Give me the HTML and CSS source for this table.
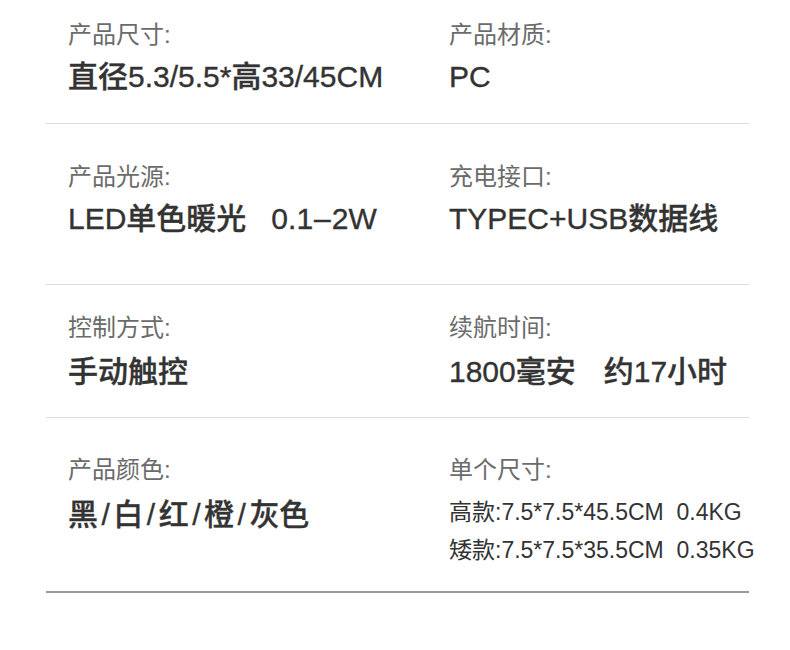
FILE: index.html
```html
<!DOCTYPE html>
<html lang="zh-CN">
<head>
<meta charset="utf-8">
<title>产品参数</title>
<link rel="stylesheet" href="styles.css">
</head>
<body>
<main class="specs">
  <section class="row row-1">
    <div class="cell">
      <div class="label">产品尺寸:</div>
      <div class="value">直径5.3/5.5*高33/45CM</div>
    </div>
    <div class="cell">
      <div class="label">产品材质:</div>
      <div class="value">PC</div>
    </div>
  </section>
  <section class="row row-2">
    <div class="cell">
      <div class="label">产品光源:</div>
      <div class="value">LED单色暖光&nbsp;&nbsp; 0.1<span class="dash">–</span>2W</div>
    </div>
    <div class="cell">
      <div class="label">充电接口:</div>
      <div class="value">TYPEC+USB数据线</div>
    </div>
  </section>
  <section class="row row-3">
    <div class="cell">
      <div class="label">控制方式:</div>
      <div class="value">手动触控</div>
    </div>
    <div class="cell">
      <div class="label">续航时间:</div>
      <div class="value">1800毫安<span class="gap"></span>约17小时</div>
    </div>
  </section>
  <section class="row row-4">
    <div class="cell">
      <div class="label">产品颜色:</div>
      <div class="value">黑<span class="sep">/</span>白<span class="sep">/</span>红<span class="sep">/</span>橙<span class="sep">/</span>灰色</div>
    </div>
    <div class="cell cell-lines">
      <div class="label">单个尺寸:</div>
      <div class="value-lines">
        <div class="value-small">高款:7.5*7.5*45.5CM&nbsp; 0.4KG</div>
        <div class="value-small">矮款:7.5*7.5*35.5CM&nbsp; 0.35KG</div>
      </div>
    </div>
  </section>
</main>
</body>
</html>
```

FILE: styles.css
```css
html, body {
  margin: 0;
  padding: 0;
  background: #ffffff;
}

body {
  font-family: "Liberation Sans", "Noto Sans CJK SC", sans-serif;
  color: #333333;
}

.specs {
  width: 703px;
  margin-left: 46px;
}

.row {
  display: grid;
  grid-template-columns: 381px 1fr;
  padding-left: 22px;
  border-bottom: 1px solid #dddddd;
}

.row-1 { padding-top: 20px; padding-bottom: 26px; }
.row-2 { padding-top: 38px; padding-bottom: 45px; }
.row-3 { padding-top: 28px; padding-bottom: 25px; }
.row-4 { padding-top: 37px; padding-bottom: 22px; border-bottom: 2px solid #9a9a9a; }

.cell {
  display: flex;
  flex-direction: column;
  gap: 7px;
}

.row-3 .cell { gap: 9px; }
.row-4 .cell { gap: 10px; }
.row-4 .cell-lines { gap: 8px; }

.label {
  font-size: 24px;
  line-height: 30px;
  color: #6b6b6b;
}

.value {
  font-size: 30px;
  line-height: 40px;
  font-weight: 500;
  color: #333333;
  white-space: nowrap;
  -webkit-text-stroke: 0.35px #333333;
}

.value .sep {
  padding: 0 3.5px;
}

.value .dash {
  display: inline-block;
  padding: 0 1px;
}

.value .gap {
  display: inline-block;
  width: 28px;
}

.value-small {
  font-size: 23px;
  line-height: 38px;
  color: #333333;
  white-space: nowrap;
}
```
